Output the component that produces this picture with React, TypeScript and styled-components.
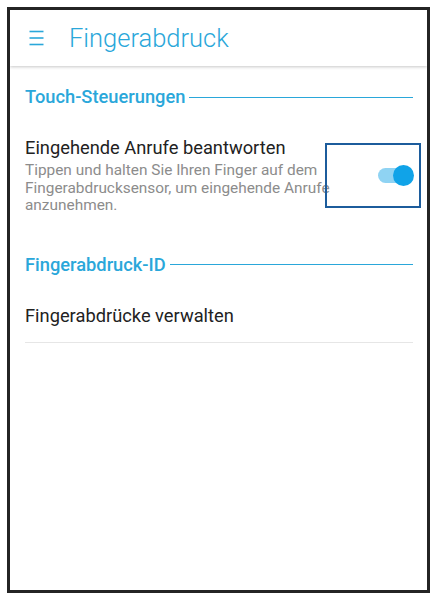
import React from 'react'
import styled, { createGlobalStyle } from 'styled-components'

const GlobalStyle = createGlobalStyle`
  html, body {
    margin: 0;
    padding: 0;
    background: #ffffff;
    font-family: Roboto, "Noto Sans", Arial, sans-serif;
  }
`

const accent = '#2aa7da'

function Hamburger(): JSX.Element {
  return (
    <svg width="15" height="16" viewBox="0 0 15 16">
      <g stroke={accent} strokeWidth="1.6">
        <line x1="0.5" y1="1.5" x2="14.5" y2="1.5" />
        <line x1="0.5" y1="8" x2="14.5" y2="8" />
        <line x1="0.5" y1="14.5" x2="14.5" y2="14.5" />
      </g>
    </svg>
  )
}

function App(): JSX.Element {
  return (
    <>
      <GlobalStyle />
      <Frame>
        <Header>
          <Hamburger />
          <Title>Fingerabdruck</Title>
        </Header>
        <Content>
          <SectionHeader>
            <SectionLabel>Touch-Steuerungen</SectionLabel>
            <SectionLine />
          </SectionHeader>
          <ToggleItem>
            <ItemText>
              <ItemTitle>Eingehende Anrufe beantworten</ItemTitle>
              <ItemSub>
                Tippen und halten Sie Ihren Finger auf dem Fingerabdrucksensor, um eingehende Anrufe
                anzunehmen.
              </ItemSub>
            </ItemText>
            <SwitchBox>
              <Switch>
                <Track />
                <Thumb />
              </Switch>
            </SwitchBox>
          </ToggleItem>
          <SectionHeader $top={39}>
            <SectionLabel>Fingerabdruck-ID</SectionLabel>
            <SectionLine />
          </SectionHeader>
          <PlainItem>Fingerabdrücke verwalten</PlainItem>
        </Content>
      </Frame>
    </>
  )
}

const Frame = styled.div`
  box-sizing: border-box;
  margin: 7px 0 0 7px;
  width: 423px;
  height: 586px;
  border: 3px solid #242424;
  background: #ffffff;
  overflow: hidden;
`

const Header = styled.div`
  height: 56px;
  display: flex;
  align-items: center;
  padding-left: 19px;
  background: #ffffff;
  box-shadow: 0 1px 3px rgba(0, 0, 0, 0.22);
  position: relative;
`

const Title = styled.div`
  margin-left: 25px;
  font-size: 25.5px;
  font-weight: 300;
  color: ${accent};
`

const Content = styled.div`
  padding: 0 14px 0 15px;
`

const SectionHeader = styled.div<{ $top?: number }>`
  display: flex;
  align-items: center;
  gap: 4px;
  margin-top: ${(p) => p.$top ?? 20}px;
`

const SectionLabel = styled.div`
  font-size: 18.3px;
  font-weight: 500;
  color: ${accent};
  line-height: 22px;
`

const SectionLine = styled.div`
  flex: 1;
  height: 1px;
  background: ${accent};
`

const ToggleItem = styled.div`
  display: flex;
  align-items: flex-start;
  margin-top: 29px;
`

const ItemText = styled.div`
  flex: none;
  width: 312px;
  margin-right: -12px;
`

const ItemTitle = styled.div`
  font-size: 18.3px;
  color: #222222;
  line-height: 22px;
`

const ItemSub = styled.div`
  font-size: 15.4px;
  color: #8c8c8c;
  line-height: 17.5px;
  margin-top: 3px;
`

const SwitchBox = styled.div`
  position: relative;
  box-sizing: border-box;
  margin: 6px -8px 0 auto;
  width: 96px;
  height: 65px;
  border: 2px solid #1c5c9c;
  display: flex;
  align-items: center;
  justify-content: flex-end;
  padding-right: 5px;
`

const Switch = styled.div`
  position: relative;
  width: 36px;
  height: 21px;
`

const Track = styled.div`
  position: absolute;
  left: 0;
  top: 3px;
  width: 30px;
  height: 15px;
  border-radius: 7.5px;
  background: #8fd3f3;
`

const Thumb = styled.div`
  position: absolute;
  right: 0;
  top: 0;
  width: 21px;
  height: 21px;
  border-radius: 50%;
  background: #10a3e8;
`

const PlainItem = styled.div`
  font-size: 18.3px;
  color: #222222;
  line-height: 22px;
  padding: 29px 0 15px;
  border-bottom: 1px solid #e6e6e6;
`

export default App
